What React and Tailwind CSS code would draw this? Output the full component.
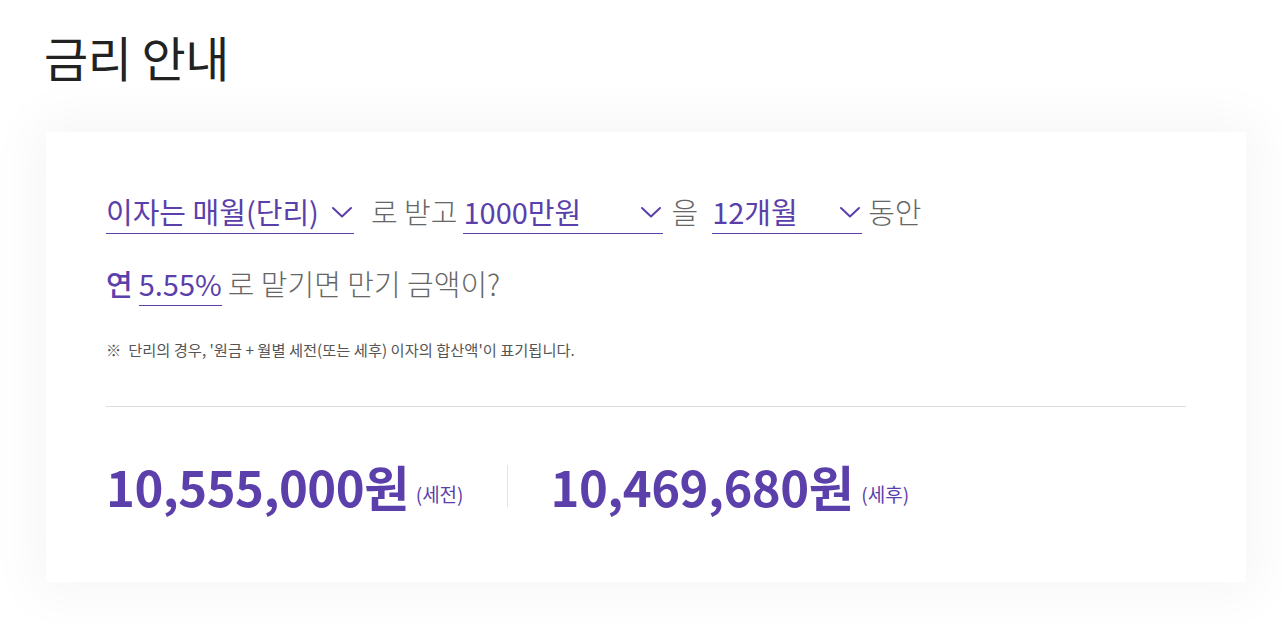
import React from 'react';

const Chevron = () => (
  <svg width="24" height="24" viewBox="0 0 24 24" fill="none" stroke="#5b3fab" strokeWidth="2" strokeLinecap="round" strokeLinejoin="round">
    <path d="M3 8l9 8.5L21 8" />
  </svg>
);

const Select = ({ label, width }) => (
  <div className={`flex items-center justify-between border-b border-[#5b3fab] h-[44px] ${width}`}>
    <span className="text-[#5b3fab] font-normal">{label}</span>
    <Chevron />
  </div>
);

export default function App() {
  return (
    <div
      className="w-[1284px] h-[623px] bg-white overflow-hidden"
      style={{ fontFamily: '"Noto Sans CJK KR", "Noto Sans", sans-serif' }}
    >
      <h1 className="pl-[44px] pt-[24px] text-[48px] leading-[64px] text-[#222] tracking-[-0.5px]">금리 안내</h1>

      <div className="ml-[46px] mt-[44px] w-[1200px] h-[450px] bg-white shadow-[0_0_50px_12px_rgba(0,0,0,0.04)] px-[60px] pt-[58px]">
        <div className="flex items-center text-[29px] font-light text-[#666]">
          <Select label="이자는 매월(단리)" width="w-[248px]" />
          <span className="ml-[17px] mr-[6px]">로 받고</span>
          <Select label="1000만원" width="w-[200px]" />
          <span className="ml-[8px] mr-[14px]">을</span>
          <Select label="12개월" width="w-[150px]" />
          <span className="ml-[6px]">동안</span>
        </div>

        <div className="flex items-center mt-[28px] text-[29px] font-light text-[#666]">
          <span className="text-[#5b3fab] font-medium">연</span>
          <span className="ml-[6px] border-b border-[#5b3fab] h-[44px] flex items-center text-[#5b3fab] font-normal">5.55%</span>
          <span className="ml-[6px]">로 맡기면 만기 금액이?</span>
        </div>

        <p className="mt-[32px] text-[15.3px] leading-[22px] text-[#555]">※&nbsp; 단리의 경우, '원금 + 월별 세전(또는 세후) 이자의 합산액'이 표기됩니다.</p>

        <div className="mt-[46px] border-t border-[#dcdcdc] w-[1080px]" />

        <div className="flex items-center mt-[47px]">
          <div className="flex items-end">
            <span className="text-[49px] leading-[64px] font-semibold text-[#5b3fab] tracking-[-0.5px]">10,555,000원</span>
            <span className="ml-[7px] mb-[10px] text-[19px] text-[#5b3fab]">(세전)</span>
          </div>
          <div className="mx-[43px] w-px h-[42px] bg-[#e3e3e3]" />
          <div className="flex items-end">
            <span className="text-[49px] leading-[64px] font-semibold text-[#5b3fab] tracking-[-0.5px]">10,469,680원</span>
            <span className="ml-[8px] mb-[10px] text-[19px] text-[#5b3fab]">(세후)</span>
          </div>
        </div>
      </div>
    </div>
  );
}
